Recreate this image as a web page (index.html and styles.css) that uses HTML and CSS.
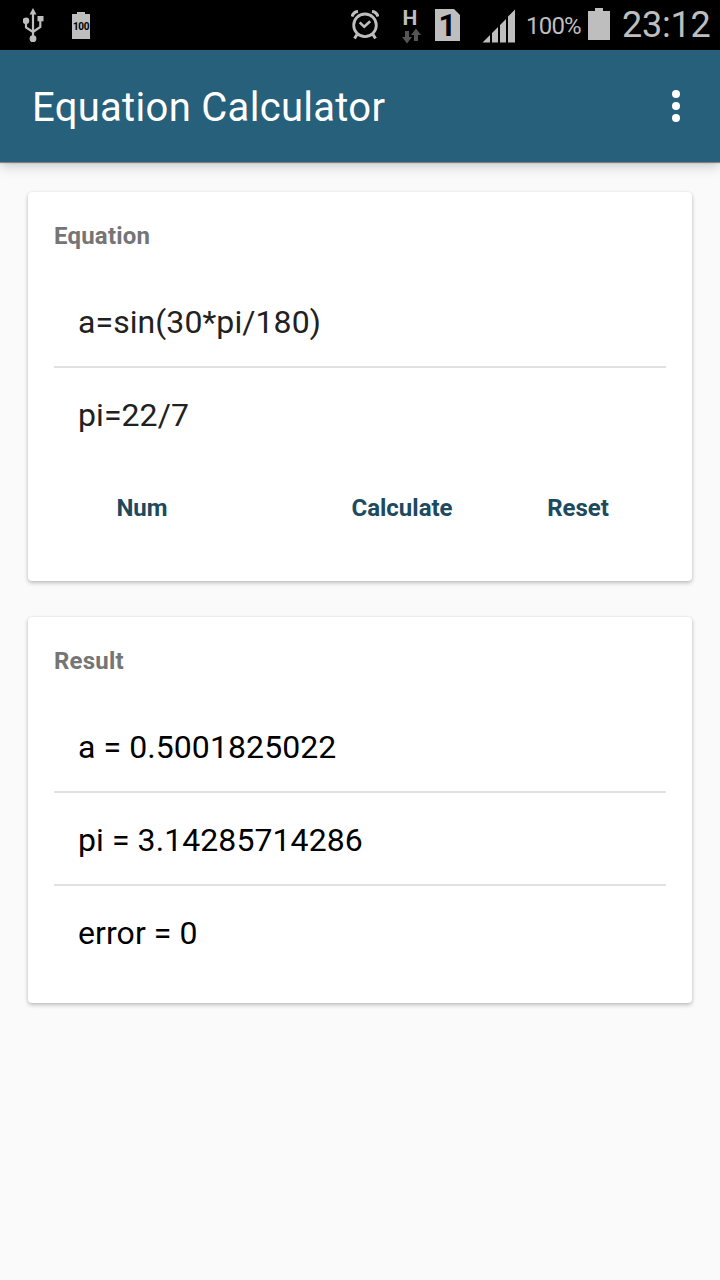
FILE: index.html
```html
<!DOCTYPE html>
<html lang="en">
<head>
    <meta charset="UTF-8">
    <title>Equation Calculator</title>
    <link rel="stylesheet" href="styles.css">
</head>
<body>
    <div class="status-bar">
        <div class="status-left">
            <svg class="icon-usb" width="22" height="36" viewBox="0 0 22 36">
                <path d="M10 0l3.500 6.500h-7z" fill="#bebebe"/>
                <path d="M10 5v26M3 13v6.500l7 4.500M17.300 10v9l-7.300 5" fill="none" stroke="#bebebe" stroke-width="2.200"/>
                <circle cx="3" cy="12.700" r="3.300" fill="#bebebe"/>
                <rect x="14.500" y="8" width="6" height="5.300" fill="#bebebe"/>
                <circle cx="10" cy="30.700" r="3.400" fill="#bebebe"/>
            </svg>
            <div class="battery-small">100</div>
        </div>
        <div class="status-right">
            <svg class="icon-alarm" width="28" height="30" viewBox="0 0 28 30">
                <g fill="none" stroke="#bebebe">
                    <circle cx="14" cy="15.300" r="11.300" stroke-width="2.800"/>
                    <path d="M8.700 12.300l4.500 4.500 6-5.500" stroke-width="2.600"/>
                    <path d="M1 6.500C2 3.500 4 1.800 7 1.500M21 1.500c3 .3 5 2 6 5" stroke-width="3.200"/>
                    <path d="M6 24.500l-2.500 4M22 24.500l2.500 4" stroke-width="3"/>
                </g>
            </svg>
            <div class="network">
                <span class="network-type">H</span>
                <svg class="icon-arrows" width="20" height="16" viewBox="0 0 20 16">
                    <path d="M3 3h4v6h3L5 15.500 0 9h3z" fill="#555"/>
                    <path d="M12 13h4V7h3L14 .5 9 7h3z" fill="#555"/>
                </svg>
            </div>
            <div class="sim">1</div>
            <svg class="icon-signal" width="34" height="34" viewBox="0 0 34 34">
                <path d="M.5 33.500L8 26v7.500zM10 24l6-6v15.500h-6zM18 16l6-6v23.500h-6zM26 7.500l7-7v33h-7z" fill="#bebebe"/>
            </svg>
            <span class="percent">100%</span>
            <svg class="icon-battery" width="22" height="32" viewBox="0 0 22 32">
                <path d="M7 0h8v3h7v29H0V3h7z" fill="#bebebe"/>
            </svg>
            <span class="clock">23:12</span>
        </div>
    </div>

    <div class="toolbar">
        <h1>Equation Calculator</h1>
        <button class="menu-button" aria-label="More options">
            <svg width="8" height="32" viewBox="0 0 8 32">
                <circle cx="4" cy="4" r="4" fill="#fff"/>
                <circle cx="4" cy="16" r="4" fill="#fff"/>
                <circle cx="4" cy="28" r="4" fill="#fff"/>
            </svg>
        </button>
    </div>

    <div class="container">
        <div class="card">
            <h2>Equation</h2>
            <div class="row input-row">a=sin(30*pi/180)</div>
            <div class="row input-row">pi=22/7</div>
            <div class="buttons">
                <button class="button num">Num</button>
                <button class="button">Calculate</button>
                <button class="button">Reset</button>
            </div>
        </div>

        <div class="card">
            <h2>Result</h2>
            <div class="row">a = 0.5001825022</div>
            <div class="row">pi = 3.14285714286</div>
            <div class="row">error = 0</div>
        </div>
    </div>
</body>
</html>
```
FILE: styles.css
```css
* {
    box-sizing: border-box;
}
body {
    font-family: Roboto, sans-serif;
    margin: 0;
    min-height: 1280px;
    background-color: #fafafa;
}
svg {
    display: block;
    flex: none;
}
.status-bar {
    display: flex;
    justify-content: space-between;
    height: 50px;
    background-color: #000;
    color: #bebebe;
}
.status-left,
.status-right {
    display: flex;
    align-items: flex-start;
}
.icon-usb {
    margin: 8px 0 0 23px;
}
/* battery with a small cap on top */
.battery-small {
    width: 18px;
    height: 27px;
    margin: 12px 0 0 27px;
    padding-top: 2px;
    background: linear-gradient(#bebebe, #bebebe) 5px 0 / 8px 2px no-repeat,
        linear-gradient(#bebebe, #bebebe) 0 2px / 18px 25px no-repeat;
    color: #000;
    font-size: 10px;
    font-weight: bold;
    line-height: 26px;
    text-align: center;
    letter-spacing: -0.4px;
}
.icon-alarm {
    margin: 10px 0 0 0;
}
.network {
    width: 20px;
    margin: 8px 0 0 23px;
    text-align: center;
}
.network-type {
    display: block;
    height: 20px;
    font-size: 21px;
    font-weight: bold;
    line-height: 20px;
    padding-right: 4px;
}
.sim {
    width: 25px;
    height: 32px;
    margin: 9px 0 0 13px;
    background-color: #bebebe;
    clip-path: polygon(0 0, 19px 0, 100% 6px, 100% 100%, 0 100%);
    color: #000;
    font-size: 31px;
    font-weight: bold;
    line-height: 33px;
    text-align: center;
}
.icon-signal {
    margin: 9px 0 0 22px;
}
.percent {
    width: 57px;
    margin-left: 10px;
    font-size: 24px;
    line-height: 52px;
    letter-spacing: -0.8px;
}
.icon-battery {
    margin: 8px 0 0 5px;
}
.clock {
    width: 98px;
    margin-left: 12px;
    font-size: 36px;
    line-height: 50px;
    letter-spacing: -0.2px;
}
.toolbar {
    display: flex;
    align-items: center;
    justify-content: space-between;
    height: 112px;
    padding: 0 40px 0 32px;
    background-color: #27607a;
    box-shadow: 0 1px 1px rgba(0, 0, 0, 0.4), 0 4px 12px rgba(0, 0, 0, 0.2);
}
h1 {
    margin: 0;
    padding-top: 2px;
    color: #fff;
    font-size: 40px;
    font-weight: normal;
    letter-spacing: 0.3px;
}
.menu-button {
    padding: 0;
    border: none;
    background: none;
}
.container {
    display: flex;
    flex-direction: column;
    gap: 36px;
    padding: 30px 28px;
}
.card {
    padding: 26px;
    background-color: #fff;
    border-radius: 4px;
    box-shadow: 0 2px 4px rgba(0, 0, 0, 0.24), 0 0 2px rgba(0, 0, 0, 0.08);
}
h2 {
    height: 57px;
    margin: 0;
    color: #757575;
    font-size: 24px;
    font-weight: bold;
    line-height: 36px;
    letter-spacing: 0.2px;
}
.row {
    height: 91px;
    padding: 0 24px;
    color: #000;
    font-size: 32px;
    line-height: 95px;
    letter-spacing: 0.08px;
}
.row + .row {
    height: 93px;
    border-top: 2px solid #e1e1e1;
}
.input-row {
    color: #212121;
}
.buttons {
    display: flex;
    height: 96px;
}
.button {
    width: 176px;
    padding: 2px 0 0;
    border: none;
    background: none;
    color: #1d4a5e;
    font-family: inherit;
    font-size: 24px;
    font-weight: bold;
}
.num {
    margin-right: auto;
}
```
